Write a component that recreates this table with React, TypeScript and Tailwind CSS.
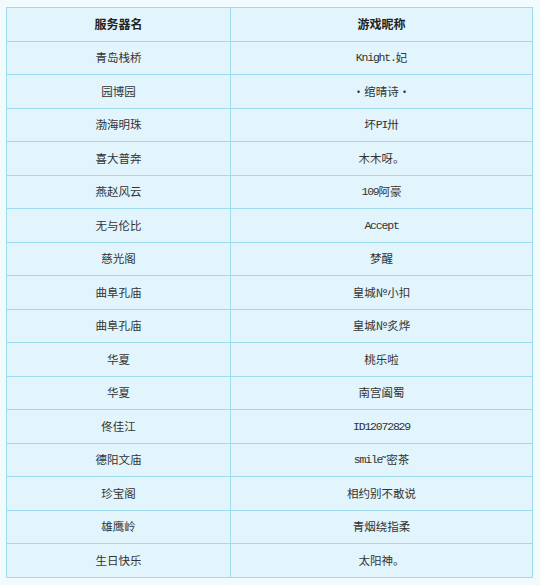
const rows: [string, string][] = [
  ["青岛栈桥", "Knight.妃"],
  ["园博园", "·绾晴诗·"],
  ["渤海明珠", "坏PI卅"],
  ["喜大普奔", "木木呀。"],
  ["燕赵风云", "109阿豪"],
  ["无与伦比", "Accept"],
  ["慈光阁", "梦醒"],
  ["曲阜孔庙", "皇城№小扣"],
  ["曲阜孔庙", "皇城№炙烨"],
  ["华夏", "桃乐啦"],
  ["华夏", "南宫阖蜀"],
  ["佟佳江", "ID12072829"],
  ["德阳文庙", "smile˜密茶"],
  ["珍宝阁", "相约别不敢说"],
  ["雄鹰岭", "青烟绕指柔"],
  ["生日快乐", "太阳神。"],
];

// split ascii runs so they get the narrow monospace look
function Mixed({ text }: { text: string }) {
  const parts = text.match(/[\x20-\x7e]+|[^\x20-\x7e]+/g) ?? [];
  return (
    <>
      {parts.map((p, i) =>
        /^[\x20-\x7e]+$/.test(p) ? (
          <span key={i} className="font-['Liberation_Mono',monospace] tracking-[-1.2px]">
            {p}
          </span>
        ) : (
          <span key={i}>{p}</span>
        )
      )}
    </>
  );
}

export default function App() {
  return (
    <div className="h-[585px] w-[540px] bg-[#f1fafd] pl-[6px] pt-[7px] font-['Noto_Sans_CJK_SC',sans-serif] text-[11.5px] text-[#333]">
      <div className="grid w-[527px] grid-cols-[224px_302px] border-l border-t border-[#9fdbee] bg-[#e2f5fc]">
        <div className="flex h-[33.5px] items-center justify-center border-b border-r border-[#9fdbee] text-[12px] font-bold text-[#222]">
          服务器名
        </div>
        <div className="flex h-[33.5px] items-center justify-center border-b border-r border-[#9fdbee] text-[12px] font-bold text-[#222]">
          游戏昵称
        </div>
        {rows.map(([server, nick], i) => (
          <div key={i} className="contents">
            <div className="flex h-[33.5px] items-center justify-center border-b border-r border-[#9fdbee]">
              {server}
            </div>
            <div className="flex h-[33.5px] items-center justify-center border-b border-r border-[#9fdbee]">
              <Mixed text={nick} />
            </div>
          </div>
        ))}
      </div>
    </div>
  );
}
